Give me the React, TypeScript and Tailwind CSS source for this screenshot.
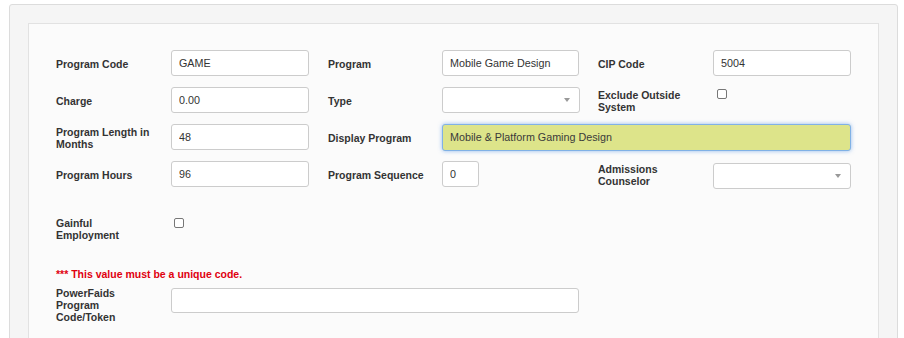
const label = "shrink-0 pr-[16px] pt-[2px] text-[10.5px] font-bold leading-[12px] text-[#333]";
const box =
  "h-[26px] rounded-[3px] border border-[#ccc] bg-white px-[7px] text-[10.75px] text-[#333] outline-none";

function Field({ value, w = "w-[138px]" }: { value: string; w?: string }) {
  return <input readOnly value={value} className={`${box} ${w}`} />;
}

function Select() {
  return (
    <div className={`${box} w-[138px] flex items-center justify-end pr-[9px]`}>
      <span className="h-0 w-0 border-l-[3px] border-r-[3px] border-t-[4px] border-l-transparent border-r-transparent border-t-[#999]" />
    </div>
  );
}

function Check() {
  return <span className="block h-[10px] w-[10px] rounded-[2px] border border-[#777] bg-white" />;
}

function Group({ name, lw = "w-[115px]", children }: { name: string; lw?: string; children: React.ReactNode }) {
  return (
    <div className="flex w-[271px] items-center">
      <div className={`${label} ${lw}`}>{name}</div>
      {children}
    </div>
  );
}

export default function App() {
  return (
    <div className="h-[338px] overflow-hidden bg-white pl-[9px] pt-[4px] font-['Liberation_Sans',Arial,sans-serif]">
      <div className="h-[400px] w-[889px] rounded-[3px] border border-[#dcdcdc] bg-[#f5f5f5] p-[18px]">
        <div className="h-[380px] w-[851px] border border-[#e2e2e2] bg-[#fbfbfb] pl-[27px] pt-[26px]">
          <div className="flex h-[26px] items-center">
            <Group name="Program Code">
              <Field value="GAME" />
            </Group>
            <Group name="Program" lw="w-[114px] ml-[1px]">
              <Field value="Mobile Game Design" w="w-[137px]" />
            </Group>
            <Group name="CIP Code">
              <Field value="5004" />
            </Group>
          </div>

          <div className="mt-[11px] flex h-[26px] items-center">
            <Group name="Charge">
              <Field value="0.00" />
            </Group>
            <Group name="Type" lw="w-[114px] ml-[1px]">
              <div className="w-[137px]">
                <Select />
              </div>
            </Group>
            <Group name="Exclude Outside System">
              <div className="ml-[4px] -mt-[12px]">
                <Check />
              </div>
            </Group>
          </div>

          <div className="mt-[11px] flex h-[26px] items-center">
            <Group name="Program Length in Months">
              <Field value="48" />
            </Group>
            <div className="flex items-center">
              <div className={`${label} ml-[1px] w-[114px]`}>Display Program</div>
              <input
                readOnly
                value="Mobile & Platform Gaming Design"
                className="h-[27px] w-[409px] rounded-[3px] border border-[#80b1e6] bg-[#dde48a] px-[7px] text-[10.75px] text-[#3a3a3a] shadow-[0_0_4px_rgba(102,160,233,0.7)] outline-none"
              />
            </div>
          </div>

          <div className="mt-[10px] flex h-[28px] items-center">
            <Group name="Program Hours">
              <Field value="96" />
            </Group>
            <Group name="Program Sequence" lw="w-[114px] ml-[1px]">
              <Field value="0" w="w-[37px]" />
            </Group>
            <Group name="Admissions Counselor">
              <div className="mt-[3px]">
                <Select />
              </div>
            </Group>
          </div>

          <div className="mt-[29px] flex items-start">
            <div className={`${label} w-[115px] !pt-0`}>Gainful Employment</div>
            <div className="ml-[3px] mt-[1px]">
              <Check />
            </div>
          </div>

          <p className="mt-[27px] text-[10.5px] font-bold leading-[12px] text-[#e0000f]">
            *** This value must be a unique code.
          </p>

          <div className="mt-[7px] flex items-start">
            <div className={`${label} w-[115px] !pt-0 leading-[12.4px]`}>PowerFaids Program Code/Token</div>
            <Field value="" w="w-[408px] !h-[25px] mt-[1px]" />
          </div>
        </div>
      </div>
    </div>
  );
}
